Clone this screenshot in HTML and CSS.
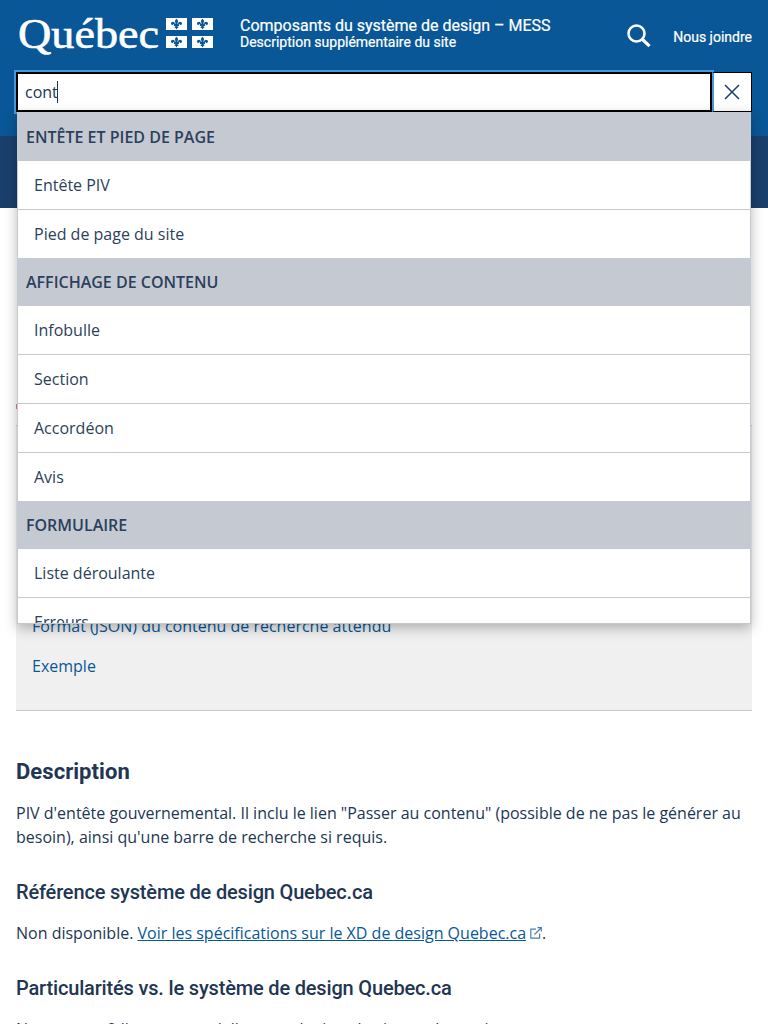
FILE: index.html
```html
<!DOCTYPE html>
<html lang="fr">
<head>
<meta charset="utf-8">
<title>Composants du système de design – MESS</title>
<link rel="stylesheet" href="styles.css">
</head>
<body>
<svg class="defs" width="0" height="0" aria-hidden="true">
  <symbol id="flag" viewBox="0 0 21 12">
    <rect width="21" height="12" fill="#fff"/>
    <path fill="#095797" d="M10.5.7c1 .9 1.6 1.7 1.5 2.7-.1.9-.6 1.5-.7 2.4h.8c.1-1.3.8-2.1 1.9-2.1 1.2 0 2 .8 2 1.8 0 .8-.6 1.5-1.4 1.4-.5 0-.8-.4-.8-.9-.8.1-1 .6-.9 1.2h.2v.9h-1.6c.1.7.5 1 1.1.9-.1.8-.6 1.100-1.200 1l-.9 1.500-.9-1.500c-.6.1-1.100-.2-1.200-1 .6.1 1-.2 1.100-.9H7.900v-.9h.2c.1-.6-.1-1.100-.9-1.200 0 .5-.3.9-.8.9C5.600 7 5 6.300 5 5.500c0-1 .8-1.800 2-1.800 1.100 0 1.800.8 1.900 2.100h.8c-.1-.9-.6-1.500-.7-2.400-.1-1 .5-1.800 1.500-2.700z"/>
  </symbol>
</svg>
<header class="piv">
  <div class="piv-top">
    <svg class="logo" width="196" height="48" viewBox="0 0 196 48" role="img" aria-label="Québec">
      <text class="logo-text" x="0" y="35" textLength="141" lengthAdjust="spacingAndGlyphs">Québec</text>
      <use href="#flag" x="148" y="5" width="21" height="12"/>
      <use href="#flag" x="174" y="5" width="21" height="12"/>
      <use href="#flag" x="148" y="23" width="21" height="12"/>
      <use href="#flag" x="174" y="23" width="21" height="12"/>
    </svg>
    <div class="titles">
      <div class="site-title">Composants du système de design – MESS</div>
      <div class="site-desc">Description supplémentaire du site</div>
    </div>
    <svg class="loupe" width="24" height="24" viewBox="0 0 24 24" fill="none" stroke="#fff"><circle cx="9.500" cy="9.500" r="8" stroke-width="2.600"/><path d="M15 15l7.500 7.200" stroke-width="3.200"/></svg>
    <a class="contact">Nous joindre</a>
  </div>
  <div class="search">
    <div class="field">cont<span class="caret"></span></div>
    <div class="close"><svg width="16" height="16" viewBox="0 0 16 16" stroke="#19406c" stroke-width="1.500"><path d="M1 1l14 14M15 1L1 15"/></svg></div>
    <div class="results">
      <div class="group">Entête et pied de page</div>
      <div class="item">Entête PIV</div>
      <div class="item">Pied de page du site</div>
      <div class="group">Affichage de contenu</div>
      <div class="item">Infobulle</div>
      <div class="item">Section</div>
      <div class="item">Accordéon</div>
      <div class="item">Avis</div>
      <div class="group">Formulaire</div>
      <div class="item">Liste déroulante</div>
      <div class="item">Erreurs</div>
    </div>
  </div>
</header>
<div class="menu-band"></div>
<main>
  <div class="intro"><span class="mark"></span></div>
  <nav class="toc">
    <a>Format (JSON) du contenu de recherche attendu</a>
    <a>Exemple</a>
  </nav>
  <h2>Description</h2>
  <p>PIV d'entête gouvernemental. Il inclu le lien "Passer au contenu" (possible de ne pas le générer au besoin), ainsi qu'une barre de recherche si requis.</p>
  <h3>Référence système de design Quebec.ca</h3>
  <p>Non disponible. <a class="link">Voir les spécifications sur le XD de design Quebec.ca</a><svg class="ext" width="12" height="12" viewBox="0 0 12 12" fill="none" stroke="#4a7fb0" stroke-width="1.200"><path d="M6 2.200H.8v9h8.800V6.500M7.500.7h3.800v3.800M11 1L4.500 7.500"/></svg>.</p>
  <h3>Particularités vs. le système de design Quebec.ca</h3>
  <p>Nous avons 2 lignes potentielles pour le titre du site ou du service.</p>
</main>
</body>
</html>
```

FILE: styles.css
```css
* { box-sizing: border-box; }
html { height: 100%; overflow: hidden; }
body {
  margin: 0;
  height: 1024px;
  overflow: hidden;
  background: #fff;
  color: #223654;
  font: 16px/24px "Open Sans", sans-serif;
}
.defs { display: block; height: 0; }
.piv { height: 136px; padding: 0 16px; background: #095797; color: #fff; }
.piv-top { display: flex; height: 72px; align-items: flex-start; font-family: Roboto, sans-serif; }
.logo { flex: none; margin: 13px 0 0 2px; overflow: visible; }
.logo-text { fill: #fff; stroke: #fff; stroke-width: .6px; font: 400 43px "Liberation Serif", serif; }
.titles { margin: 17px 0 0 26px; flex: 1; white-space: nowrap; }
.site-title { font-size: 16px; line-height: 17px; font-weight: 400; -webkit-text-stroke: .2px #fff; }
.site-desc { font-size: 14px; line-height: 16px; font-weight: 400; -webkit-text-stroke: .2px #fff; }
.loupe { margin: 24px 22px 0 0; }
.contact { margin-top: 28px; font-size: 14px; line-height: 18px; font-weight: 400; -webkit-text-stroke: .2px #fff; }
.search { position: relative; display: flex; height: 40px; }
.field {
  display: flex;
  align-items: center;
  width: 696px;
  padding: 0 7px;
  border: 2px solid #000;
  outline: 2px solid #4a98d9;
  background: #fff;
  color: #223654;
}
.caret { width: 1px; height: 22px; margin-left: -1px; background: #223654; }
.close {
  display: grid;
  place-items: center;
  width: 40px;
  padding-right: 2px;
  border: 1px solid #000;
  border-left: 2px solid #4a98d9;
  background: #fff;
}
.results {
  position: absolute;
  z-index: 2;
  top: 40px;
  left: 1px;
  width: 734px;
  height: 512px;
  overflow: hidden;
  border: 1px solid #c5cad2;
  border-top: 0;
  background: #fff;
  color: #2c3f5c;
  box-shadow: 0 4px 12px rgba(0, 0, 0, .28);
}
.group {
  height: 48px;
  padding: 0 8px;
  line-height: 48px;
  background: #c5cad2;
  font-weight: 600;
  text-transform: uppercase;
}
.group:first-child { height: 49px; line-height: 50px; }
.item { height: 49px; padding: 0 16px; line-height: 48px; border-bottom: 1px solid #c5cad2; }
.item:has(+ .group) { height: 48px; border-bottom: 0; }
.menu-band { height: 72px; background: #19406c; }
main { padding: 0 16px; }
.intro { height: 217px; padding-top: 196px; }
.mark { display: block; width: 2px; height: 5px; background: #e58271; }
.toc {
  display: flex;
  flex-direction: column;
  justify-content: flex-end;
  gap: 16px;
  height: 286px;
  padding: 0 16px 32px;
  border: solid #c5cad2;
  border-width: 1px 0;
  background: #f0f0f0;
  color: #095797;
}
h2, h3 { margin: 0; font-family: Roboto, sans-serif; }
h2 { margin-top: 47px; font-size: 22px; line-height: 28px; font-weight: 700; letter-spacing: .05px; }
h3 { margin-top: 31px; font-size: 20px; line-height: 24px; font-weight: 500; letter-spacing: -.17px; }
p { margin: 16px 0 0; }
h2 + p { margin-top: 15px; }
h3 + p { margin-top: 17px; }
.link { color: #095797; text-decoration: underline; }
.ext { margin-left: 4px; }
```
